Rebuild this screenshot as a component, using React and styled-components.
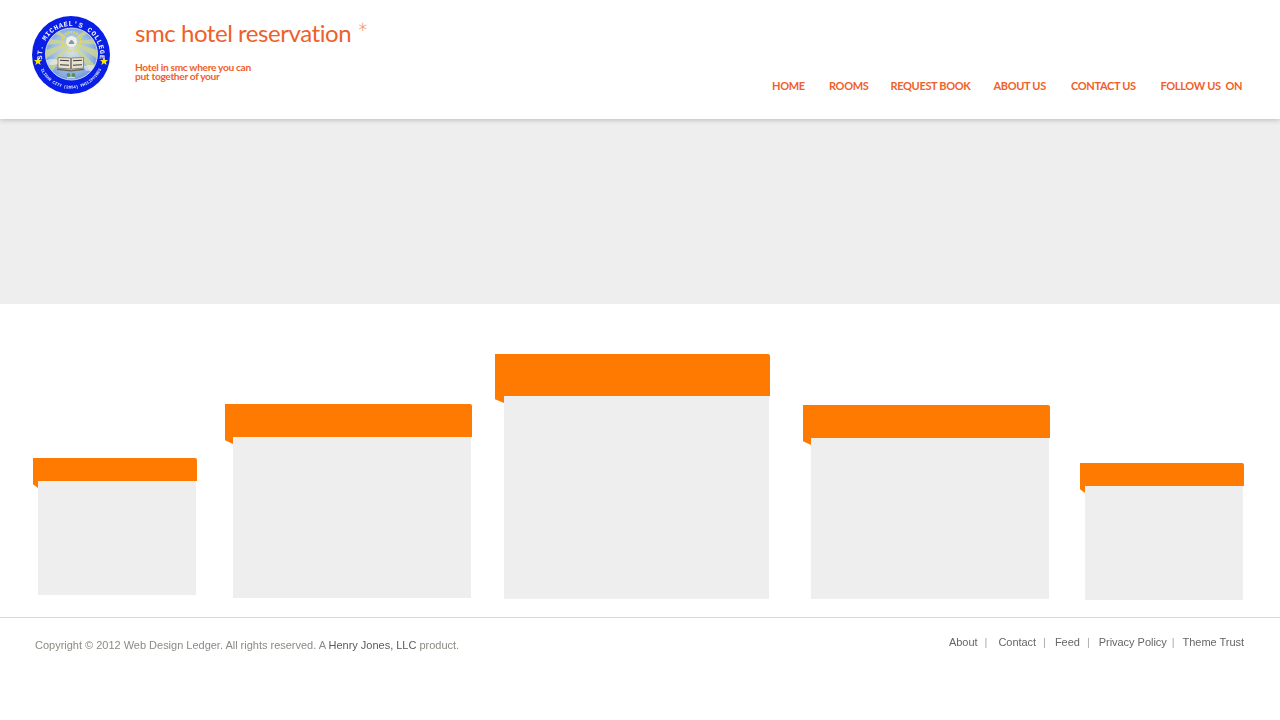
import React from "react";
import styled, { createGlobalStyle } from "styled-components";

const Global = createGlobalStyle`
  html, body { margin: 0; padding: 0; background: #fff; }
  body { font-family: "Lato", "Liberation Sans", sans-serif; }
`;

const Page = styled.div`
  width: 1280px;
  height: 720px;
  overflow: hidden;
  display: flex;
  flex-direction: column;
  background: #fff;
`;

const Header = styled.header`
  position: relative;
  z-index: 1;
  height: 119px;
  flex: none;
  display: flex;
  background: #fff;
  box-shadow: 0 1px 5px rgba(0, 0, 0, 0.22);
  padding: 16px 0 0 32px;
  box-sizing: border-box;
`;

const LogoMark = styled.svg`
  width: 78px;
  height: 78px;
  flex: none;
  display: block;
  filter: blur(0.35px);
`;

const Brand = styled.div`
  margin-left: 25px;
  width: 260px;
  flex: none;
  color: #ef5f2b;
`;

const Title = styled.h1`
  margin: 1px 0 0;
  font-size: 24px;
  line-height: 32px;
  font-weight: 400;
  letter-spacing: -0.45px;
  white-space: nowrap;
  display: flex;
`;

const Asterisk = styled.span`
  font-size: 27px;
  line-height: 32px;
  margin-left: 6px;
  font-weight: 300;
  color: #f48a63;
`;

const Tagline = styled.p`
  margin: 13.5px 0 0;
  font-size: 10.2px;
  line-height: 9.4px;
  font-weight: 700;
  letter-spacing: -0.33px;
  color: #ef5f2b;
`;

const Nav = styled.nav`
  margin-left: 377px;
  padding-top: 63px;
  display: flex;
  height: 14px;
`;

const NavItem = styled.a`
  width: ${(p) => p.$w}px;
  flex: none;
  font-size: 11px;
  line-height: 14px;
  font-weight: 700;
  letter-spacing: -0.34px;
  white-space: pre;
  color: #ef5f2b;
`;

const Hero = styled.section`
  height: 185px;
  flex: none;
  background: #eee;
`;

const Cards = styled.section`
  height: 313px;
  flex: none;
  display: flex;
  align-items: flex-end;
  box-sizing: border-box;
  padding-left: 33px;
`;

const Card = styled.article`
  width: ${(p) => p.$w}px;
  margin-left: ${(p) => p.$ml || 0}px;
  margin-bottom: ${(p) => p.$mb}px;
  flex: none;
  position: relative;
`;

const CardHead = styled.div`
  height: ${(p) => p.$h}px;
  background: #ff7a00;
  border-radius: 0 2px 0 0;
`;

const Fold = styled.span`
  position: absolute;
  left: 0;
  top: ${(p) => p.$top}px;
  width: ${(p) => p.$inset}px;
  height: 7px;
  background: #ff7a00;
  clip-path: polygon(0 0, 100% 0, 100% 100%, 0 45%);
`;

const CardBody = styled.div`
  height: ${(p) => p.$h}px;
  margin: 0 1px 0 ${(p) => p.$inset}px;
  background: #eee;
`;

const Footer = styled.footer`
  flex: 1;
  border-top: 1px solid #d9d9d9;
  box-sizing: border-box;
  display: flex;
  justify-content: space-between;
  font-family: "Liberation Sans", Arial, sans-serif;
  font-size: 11px;
  padding: 0 36px 0 35px;
  opacity: 0.999;
`;

const Copy = styled.p`
  margin: 21px 0 0;
  line-height: 13px;
  color: #8b8b85;
  white-space: nowrap;
  letter-spacing: -0.01px;
`;

const Strong = styled.a`
  color: #5a5a5a;
`;

const FootNav = styled.nav`
  display: flex;
  margin-top: 18px;
  line-height: 13px;
  color: #666;
  white-space: nowrap;
  letter-spacing: -0.03px;
`;

const Sep = styled.span`
  color: #aaa;
  margin: 0 ${(p) => p.$r}px 0 ${(p) => p.$l}px;
`;

const Logo = () => (
  <LogoMark viewBox="0 0 78 78" aria-label="St. Michael's College seal">
    <defs>
      <radialGradient id="sky" cx="50%" cy="45%" r="55%">
        <stop offset="0%" stopColor="#d7e2dc" />
        <stop offset="65%" stopColor="#9fbde2" />
        <stop offset="100%" stopColor="#6f97dc" />
      </radialGradient>
      <clipPath id="disc">
        <circle cx="39.5" cy="38" r="26" />
      </clipPath>
      <path id="arcTop" d="M 11 46.5 A 29 29 0 1 1 67 46.5" />
      <path id="arcBottom" d="M 7.5 50.5 A 33.5 33.5 0 0 0 70.5 50.5" />
    </defs>
    <circle cx="39" cy="39" r="39" fill="#0a1fe6" />
    <circle cx="39.5" cy="38" r="26" fill="url(#sky)" stroke="#e6ecf8" strokeWidth="0.8" />
    <g clipPath="url(#disc)">
      <g fill="#d3d884" opacity="0.75">
        <polygon points="39.5,26 12,22 12,29" />
        <polygon points="39.5,26 11,35 13,43" />
        <polygon points="39.5,26 15,50 21,55" />
        <polygon points="39.5,26 67,22 67,29" />
        <polygon points="39.5,26 68,35 66,43" />
        <polygon points="39.5,26 64,50 58,55" />
        <polygon points="39.5,26 24,12 20,16" />
        <polygon points="39.5,26 55,12 59,16" />
      </g>
      <ellipse cx="20" cy="46" rx="7" ry="3" fill="#eef3fb" opacity="0.6" />
      <ellipse cx="58" cy="52" rx="8" ry="3" fill="#eef3fb" opacity="0.55" />
      <ellipse cx="36" cy="58" rx="10" ry="3" fill="#8fb3e6" opacity="0.6" />
    </g>
    <circle cx="39.5" cy="25.5" r="9.5" fill="none" stroke="#e3da4e" strokeWidth="2" strokeDasharray="1.6 1.3" />
    <circle cx="39.5" cy="25.5" r="5.5" fill="#eef0ee" />
    <path d="M36.5 28 q3 -8 6 0 z" fill="#8d94a0" />
    <path d="M26 41.5 L38.5 42 L38.5 53 L26 52 Z" fill="#e9e2d0" stroke="#5d5545" strokeWidth="0.6" />
    <path d="M51.5 41.5 L39.5 42 L39.5 53 L51.5 52 Z" fill="#e9e2d0" stroke="#5d5545" strokeWidth="0.6" />
    <g stroke="#3f3b36" strokeWidth="1.1">
      <path d="M28 44.3 L37 44.7 M28 48.8 L37 49.3" />
      <path d="M41 44.7 L50 44.3 M41 49.3 L50 48.8" />
    </g>
    <path d="M25 52.5 L39 54.2 L52.5 52.5 L52.5 54 L39 55.6 L25 54 Z" fill="#6e6550" />
    <g fill="#5f8f42">
      <circle cx="36.5" cy="59" r="1.9" />
      <circle cx="41.5" cy="59" r="1.9" />
      <rect x="35" y="61" width="8" height="1.3" fill="#d8d9c0" />
    </g>
    <polygon points="6,41 7.1,44 10,44 7.8,46 8.6,49 6,47.2 3.4,49 4.2,46 2,44 4.9,44" fill="#ffe600" />
    <polygon points="72,41 73.1,44 76,44 73.8,46 74.6,49 72,47.2 69.4,49 70.2,46 68,44 70.9,44" fill="#ffe600" />
    <text fontFamily="Liberation Mono, monospace" fontSize="7" fontWeight="700" fill="#f4f6ff" letterSpacing="0.55">
      <textPath href="#arcTop" startOffset="50%" textAnchor="middle">ST. MICHAEL'S COLLEGE</textPath>
    </text>
    <text fontFamily="Liberation Mono, monospace" fontSize="4.2" fontWeight="700" fill="#dfe6ff">
      <textPath href="#arcBottom" startOffset="50%" textAnchor="middle">ILIGAN CITY (2854) PHILIPPINES</textPath>
    </text>
  </LogoMark>
);

const navItems = [
  ["HOME", 57],
  ["ROOMS", 61.5],
  ["REQUEST BOOK", 103],
  ["ABOUT US", 77.5],
  ["CONTACT US", 89.5],
  ["FOLLOW US  ON", 90],
];

const cards = [
  { ml: 0, w: 164, head: 23, body: 114, inset: 5, mb: 22 },
  { ml: 28, w: 247, head: 33, body: 161, inset: 8, mb: 19 },
  { ml: 23, w: 275, head: 42, body: 203, inset: 9, mb: 18 },
  { ml: 33, w: 247, head: 33, body: 161, inset: 8, mb: 18 },
  { ml: 30, w: 164, head: 23, body: 114, inset: 5, mb: 17 },
];

export default function App() {
  return (
    <Page>
      <Global />
      <Header>
        <Logo />
        <Brand>
          <Title>
            smc hotel reservation<Asterisk>*</Asterisk>
          </Title>
          <Tagline>
            Hotel in smc where you can
            <br />
            put together of your
          </Tagline>
        </Brand>
        <Nav>
          {navItems.map(([label, w]) => (
            <NavItem key={label} $w={w}>
              {label}
            </NavItem>
          ))}
        </Nav>
      </Header>
      <Hero />
      <Cards>
        {cards.map((c, i) => (
          <Card key={i} $w={c.w} $ml={c.ml} $mb={c.mb}>
            <CardHead $h={c.head} />
            <Fold $top={c.head} $inset={c.inset} />
            <CardBody $h={c.body} $inset={c.inset} />
          </Card>
        ))}
      </Cards>
      <Footer>
        <Copy>
          Copyright © 2012 Web Design Ledger. All rights reserved. A <Strong>Henry Jones, LLC</Strong> product.
        </Copy>
        <FootNav>
          <a>About</a>
          <Sep $l={7} $r={11}>|</Sep>
          <a>Contact</a>
          <Sep $l={7} $r={9}>|</Sep>
          <a>Feed</a>
          <Sep $l={7} $r={9}>|</Sep>
          <a>Privacy Policy</a>
          <Sep $l={5} $r={8}>|</Sep>
          <a>Theme Trust</a>
        </FootNav>
      </Footer>
    </Page>
  );
}
